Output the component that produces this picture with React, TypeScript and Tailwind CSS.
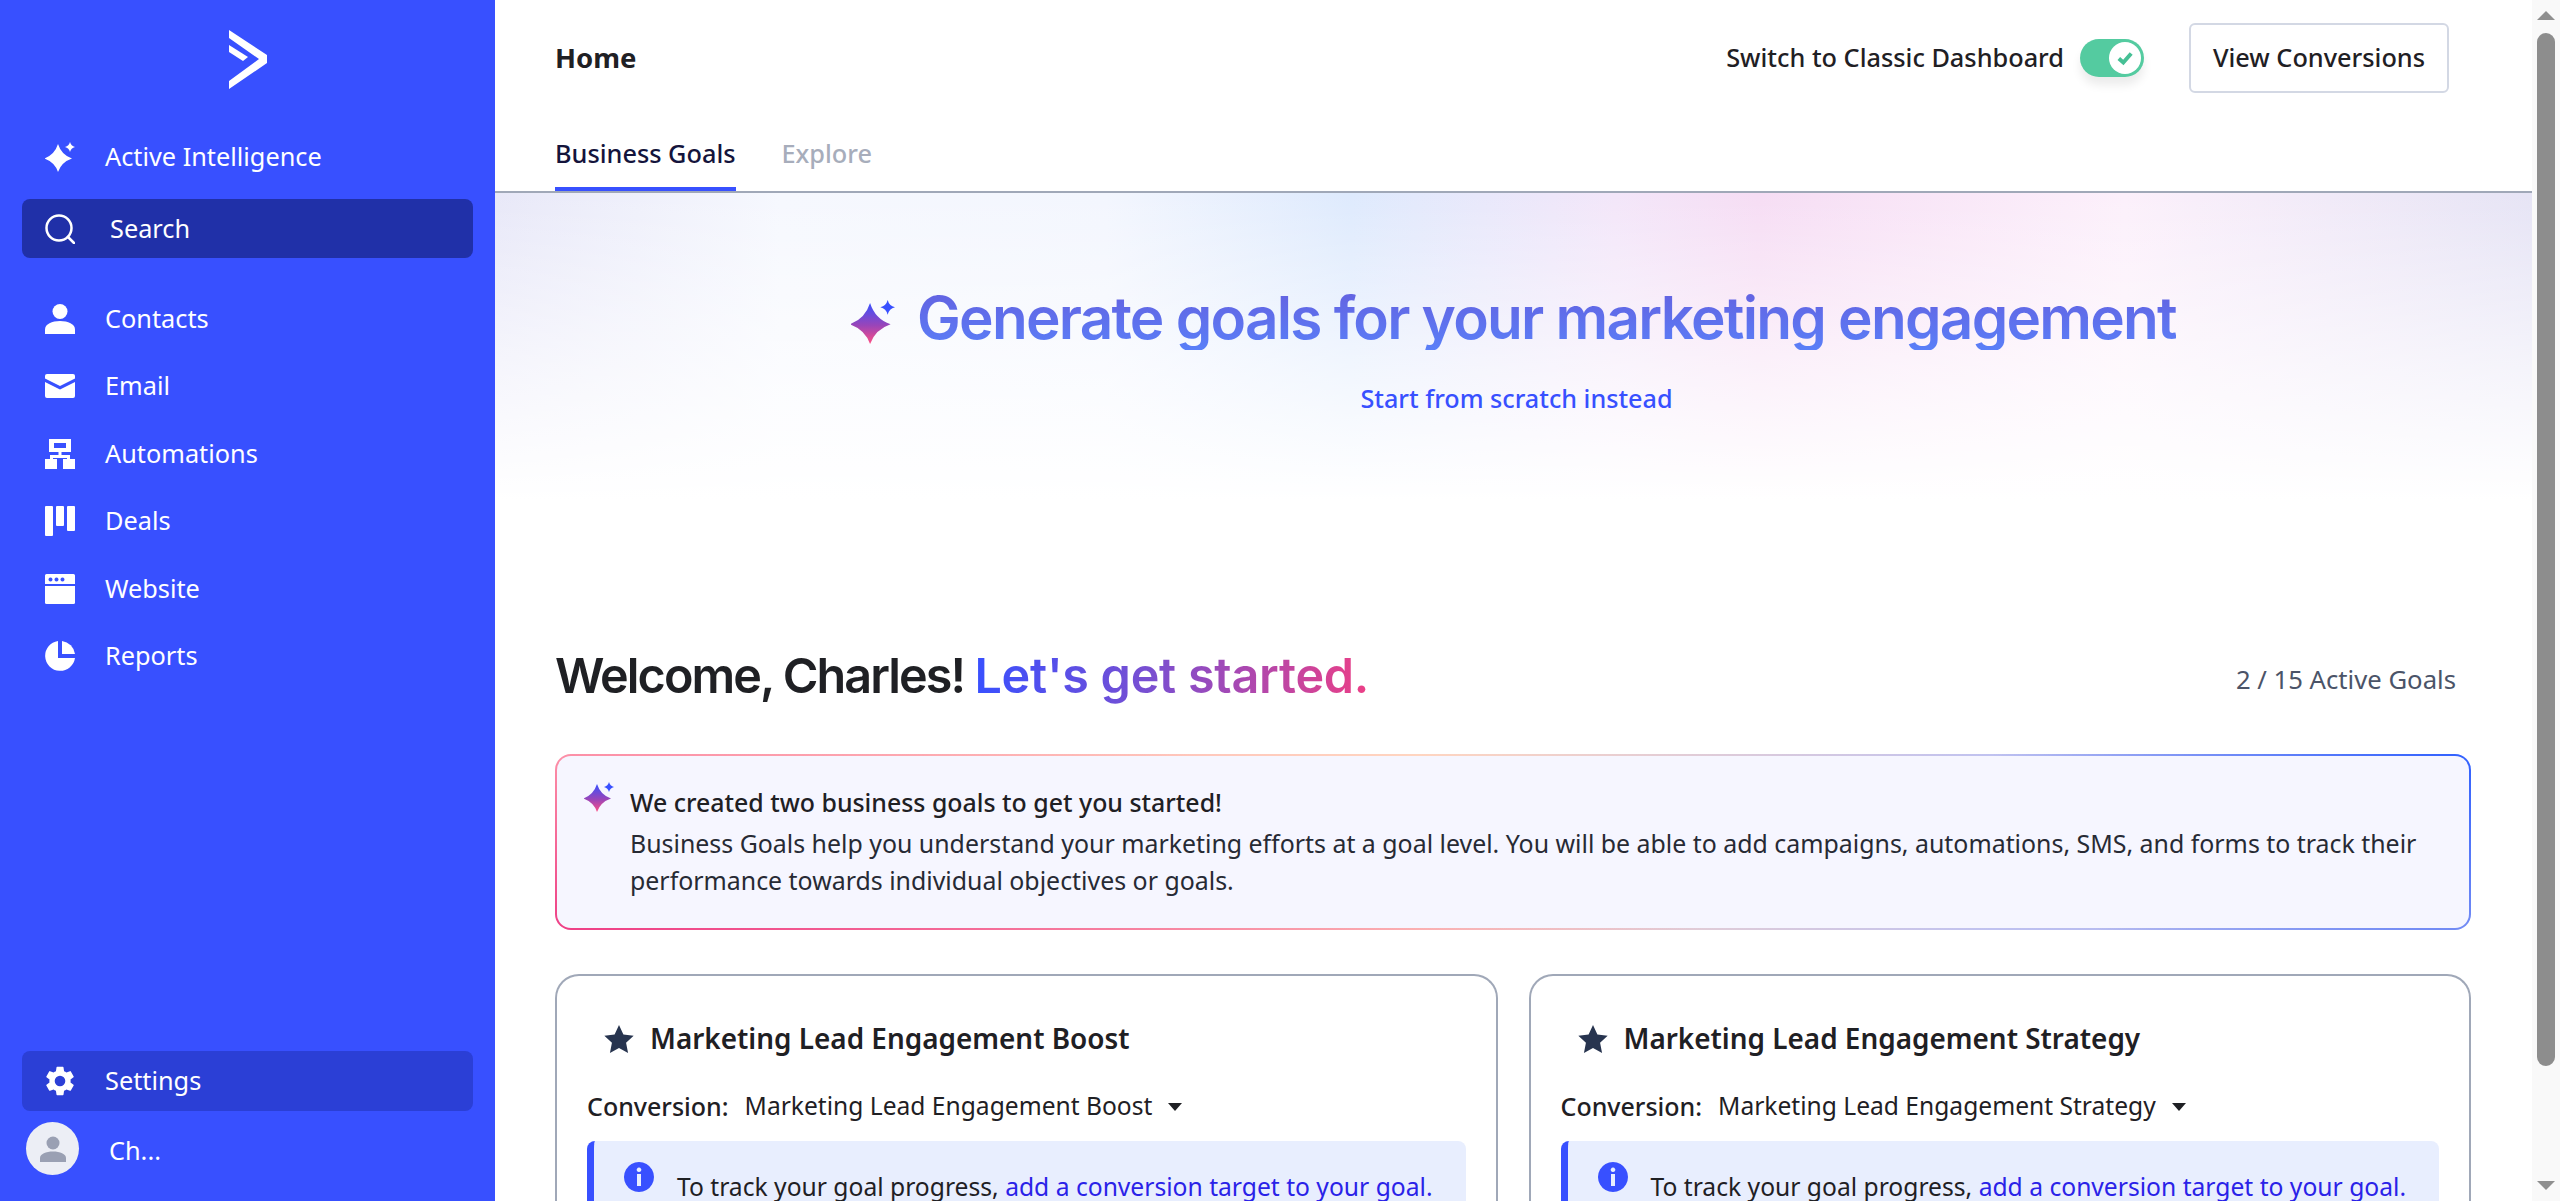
import React from "react";

const BODY = "font-['Noto_Sans','Liberation_Sans',sans-serif]";
const HEAD = "font-['Inter','Liberation_Sans',sans-serif]";

const Sparkle: React.FC<{ id: string; className?: string; gradient?: boolean }> = ({ id, className, gradient = true }) => {
    const fill = gradient ? `url(#${id})` : "currentColor";
    return (
        <svg viewBox="0 0 30 30" className={className}>
            {gradient && (
                <defs>
                    <linearGradient id={id} x1="0" y1="0" x2="0" y2="1">
                        <stop offset="0%" stopColor="#3850ff" />
                        <stop offset="55%" stopColor="#9a45b8" />
                        <stop offset="100%" stopColor="#ff4f84" />
                    </linearGradient>
                </defs>
            )}
            <path fill={fill} d="M13 2 Q16.500 13 27 16.500 Q16.500 20 13 30 Q9.500 20 -1 16.500 Q9.500 13 13 2 Z" />
            <path
                fill={gradient ? "#3850ff" : "currentColor"}
                d="M25 0 Q26 4 30 5 Q26 6 25 10 Q24 6 20 5 Q24 4 25 0 Z"
            />
        </svg>
    );
};

const PersonIcon = () => (
    <svg viewBox="0 0 30 30" className="w-[30px] h-[30px]" fill="currentColor">
        <circle cx="15" cy="7.500" r="7.500" />
        <path d="M0 25.500 C0 20 7 17 15 17 C23 17 30 20 30 25.500 L30 30 L0 30 Z" />
    </svg>
);

const MailIcon = () => (
    <svg viewBox="0 0 30 24" className="w-[30px] h-[24px]" fill="currentColor">
        <path d="M2 0 H28 A2 2 0 0 1 30 2 V4.500 L15 12 L0 4.500 V2 A2 2 0 0 1 2 0 Z" />
        <path d="M0 8 L15 15.500 L30 8 V22 A2 2 0 0 1 28 24 H2 A2 2 0 0 1 0 22 Z" />
    </svg>
);

const AutomationIcon = () => (
    <svg viewBox="0 0 30 30" className="w-[30px] h-[30px]" fill="currentColor">
        <path fillRule="evenodd" d="M4 0 H26 V13 H16.500 V16 H25 V20 H30 V30 H18 V20 H22 V19 H8 V20 H12 V30 H0 V20 H5 V16 H13.500 V13 H4 Z M9 4 V9 H21 V4 Z" />
    </svg>
);

const DealsIcon = () => (
    <svg viewBox="0 0 30 30" className="w-[30px] h-[30px]" fill="currentColor">
        <rect x="0" y="0" width="8" height="30" rx="1" />
        <rect x="11" y="0" width="8" height="20" rx="1" />
        <rect x="22" y="0" width="8" height="25" rx="1" />
    </svg>
);

const WebsiteIcon = () => (
    <svg viewBox="0 0 30 30" className="w-[30px] h-[30px]" fill="currentColor">
        <path fillRule="evenodd" d="M1.500 0 H28.500 A1.500 1.500 0 0 1 30 1.500 V10 H0 V1.500 A1.500 1.500 0 0 1 1.500 0 Z M5.500 3.500 A2 2 0 1 0 5.501 3.500 Z M11.500 3.500 A2 2 0 1 0 11.501 3.500 Z M17.500 3.500 A2 2 0 1 0 17.501 3.500 Z" />
        <path d="M0 12 H30 V28.500 A1.500 1.500 0 0 1 28.500 30 H1.500 A1.500 1.500 0 0 1 0 28.500 Z" />
    </svg>
);

const ReportsIcon = () => (
    <svg viewBox="0 0 30 30" className="w-[30px] h-[30px]" fill="currentColor">
        <path d="M13 0 V17 H30 A15 15 0 1 1 13 0 Z" />
        <path d="M17 0 A15 15 0 0 1 30 13 H17 Z" />
    </svg>
);

const GearIcon = () => (
    <svg viewBox="2.500 2 19 20" className="w-[28px] h-[30px] mx-[1px]" fill="currentColor">
        <path d="M19.140 12.940c.040-.300.060-.610.060-.940s-.020-.640-.070-.940l2.030-1.580a.49.490 0 0 0 .120-.610l-1.920-3.320a.49.490 0 0 0-.590-.220l-2.390.960a7 7 0 0 0-1.620-.940l-.360-2.540a.48.480 0 0 0-.480-.410h-3.840a.48.480 0 0 0-.470.410l-.360 2.540c-.590.240-1.130.570-1.620.940l-2.390-.960a.48.480 0 0 0-.590.220L2.740 8.870a.48.480 0 0 0 .120.610l2.030 1.580c-.050.300-.090.630-.090.940s.020.640.070.940l-2.030 1.580a.49.490 0 0 0-.120.610l1.920 3.320c.120.220.370.290.590.220l2.390-.960c.500.380 1.030.700 1.620.940l.360 2.540c.050.240.240.410.480.410h3.840c.240 0 .440-.170.470-.410l.360-2.540c.590-.240 1.130-.560 1.620-.940l2.390.960c.220.080.470 0 .590-.220l1.920-3.320a.48.480 0 0 0-.120-.610zM12 15.600a3.600 3.600 0 1 1 0-7.200 3.600 3.600 0 0 1 0 7.200z" />
    </svg>
);

const navItems: { label: string; icon: React.ReactNode }[] = [
    { label: "Contacts", icon: <PersonIcon /> },
    { label: "Email", icon: <MailIcon /> },
    { label: "Automations", icon: <AutomationIcon /> },
    { label: "Deals", icon: <DealsIcon /> },
    { label: "Website", icon: <WebsiteIcon /> },
    { label: "Reports", icon: <ReportsIcon /> },
];

const Sidebar = () => (
    <aside className="w-[495px] shrink-0 bg-[#3850ff] text-white flex flex-col pt-[30px] pb-[26px] text-[25.3px]">
        {/* Logo */}
        <div className="flex justify-center mb-[38px]">
            <svg viewBox="0 0 38 59" className="w-[38px] h-[59px]" fill="#fff">
                <path d="M0 0 L38 25 V33 L0 59 V51 L30 29 L0 8 Z" />
                <path d="M0 15 L19 27 L14 31 L0 22 Z" />
            </svg>
        </div>

        <div className="h-[60px] flex items-center pl-[45px] mb-[12px]">
            <Sparkle id="nav-spark" gradient={false} className="w-[30px] h-[30px]" />
            <span className="ml-[30px]">Active Intelligence</span>
        </div>

        <div className="h-[59px] mx-[22px] rounded-lg bg-[#2030a8] flex items-center pl-[23px] mb-[27px]">
            <svg viewBox="0 0 30 30" className="w-[30px] h-[30px]" fill="none" stroke="#fff" strokeWidth="2.500">
                <circle cx="14" cy="14" r="12.500" />
                <path d="M23 23 L29 29" strokeLinecap="round" />
            </svg>
            <span className="ml-[35px]">Search</span>
        </div>

        <nav className="flex flex-col">
            {navItems.map((item) => (
                <div key={item.label} className="h-[67.5px] flex items-center pl-[45px]">
                    <span className="w-[30px] flex justify-center">{item.icon}</span>
                    <span className="ml-[30px]">{item.label}</span>
                </div>
            ))}
        </nav>

        <div className="mt-auto">
            <div className="h-[60px] mx-[22px] rounded-lg bg-[#2b3fd6] flex items-center pl-[23px] mb-[11px]">
                <GearIcon />
                <span className="ml-[30px]">Settings</span>
            </div>
            <div className="flex items-center pl-[26px]">
                <div className="w-[53px] h-[53px] rounded-full bg-[#eceef5] flex items-center justify-center text-[#9aa0b3]">
                    <svg viewBox="0 0 26 26" className="w-[26px] h-[26px]" fill="currentColor">
                        <circle cx="13" cy="7" r="6.500" />
                        <path d="M0 26 V22 C0 18 6 15.500 13 15.500 C20 15.500 26 18 26 22 V26 Z" />
                    </svg>
                </div>
                <span className="ml-[30px] mt-[4px]">Ch...</span>
            </div>
        </div>
    </aside>
);

const Header = () => (
    <header className="h-[193px] shrink-0 border-b-2 border-[#a0a8b8] flex flex-col">
        <div className="flex items-center justify-between pl-[60px] pr-[83px] pt-[23px]">
            <h1 className="text-[27.500px] font-bold text-[#1f2024]">Home</h1>
            <div className="flex items-center">
                <span className="text-[25.300px] font-medium text-[#1f2024]">Switch to Classic Dashboard</span>
                <div className="relative w-[64px] h-[38px] rounded-full bg-[#54cba0] ml-[16px] shadow-[0_8px_10px_rgba(0,0,0,0.08)]">
                    <div className="absolute right-[3px] top-[3px] w-[32px] h-[32px] rounded-full bg-white flex items-center justify-center">
                        <svg viewBox="0 0 16 16" className="w-[18px] h-[18px]" fill="none" stroke="#46c095" strokeWidth="3.500">
                            <path d="M2.500 8.500 L6.500 12 L13.500 4" />
                        </svg>
                    </div>
                </div>
                <button className="w-[260px] h-[70px] ml-[45px] rounded-md border-2 border-[#d3d8e4] text-[25.300px] font-medium text-[#1f2024] bg-white">
                    View Conversions
                </button>
            </div>
        </div>
        <div className="flex pl-[60px] mt-auto gap-[46px] text-[25.300px] font-medium">
            <div className="h-[56px] border-b-4 border-[#3850ff] text-[#14143c]">Business Goals</div>
            <div className="text-[#a7adbb]">Explore</div>
        </div>
    </header>
);

const Hero = () => (
    <section className="h-[394px] shrink-0 flex flex-col items-center pt-[93px] bg-[linear-gradient(180deg,rgba(255,255,255,0)_0%,rgba(255,255,255,0.6)_45%,#fff_78%),linear-gradient(90deg,#e8e8f8_0%,#f6f8fe_14%,#f3f6fe_30%,#deeafd_42%,#f3e6f9_55%,#f6ddf4_62%,#fcf0fb_80%,#e6e4f5_100%)]">
        <div className="flex items-center">
            <Sparkle id="hero-spark" className="w-[44px] h-[46px] mr-[22px] mt-[8px]" />
            <h2 className={`${HEAD} text-[58.500px] leading-[64px] font-semibold tracking-[-0.03em] text-transparent bg-clip-text bg-[linear-gradient(180deg,#6460df,#5a7ff8)]`}>
                Generate goals for your marketing engagement
            </h2>
        </div>
        <a className="text-[25.200px] font-medium text-[#3850ff] mt-[30px] mr-[-6px]">Start from scratch instead</a>
    </section>
);

const GoalCard: React.FC<{ title: string }> = ({ title }) => (
    <div className="flex-1 min-w-0 rounded-[24px] border-2 border-[#a0a8b8] rounded-b-none border-b-0 h-[260px] pl-[30px] pr-[30px] overflow-hidden">
        <div className="flex items-center pl-[16px] pt-[42px]">
            <svg viewBox="0 0 24 24" className="w-[32px] h-[32px]" fill="#27344f">
                <path d="M12 1.500 L15.300 8.600 L23 9.500 L17.300 14.800 L18.800 22.500 L12 18.700 L5.200 22.500 L6.700 14.800 L1 9.500 L8.700 8.600 Z" />
            </svg>
            <h3 className="text-[27.900px] font-semibold text-[#1f2024] ml-[15px]">{title}</h3>
        </div>
        <div className="flex items-center text-[24.600px] mt-[28px] text-[#1f2024]">
            <span className="font-medium text-[25px]">Conversion:</span>
            <span className="ml-[16px]">{title}</span>
            <span className="ml-[16px] w-0 h-0 border-x-[7px] border-x-transparent border-t-[8px] border-t-[#1f2024]" />
        </div>
        <div className="flex items-start mt-[16px] h-[100px] rounded-lg bg-[#e8eefe] border-l-[7px] border-[#3850ff] pl-[30px] pt-[21px]">
            <svg viewBox="0 0 30 30" className="w-[30px] h-[30px] shrink-0" fill="#3850ff">
                <path fillRule="evenodd" d="M15 0 A15 15 0 1 1 14.999 0 Z M13 12 V24 H17 V12 Z M15 5.500 A2.300 2.300 0 1 0 15.001 5.500 Z" />
            </svg>
            <p className="ml-[23px] mt-[7px] text-[24.650px] text-[#1f2024] whitespace-nowrap">
                To track your goal progress, <a className="text-[#2a22e8]">add a conversion target to your goal.</a>
            </p>
        </div>
    </div>
);

const Scrollbar = () => (
    <div className="w-[28px] shrink-0 bg-[#f9f9f9] flex flex-col items-center">
        <span className="mt-[11px] w-0 h-0 border-x-[9px] border-x-transparent border-b-[9px] border-b-[#8f8f8f]" />
        <div className="mt-[13px] w-[18px] h-[1033px] rounded-full bg-[#8d8d8d]" />
        <span className="mt-auto mb-[11px] w-0 h-0 border-x-[9px] border-x-transparent border-t-[9px] border-t-[#8f8f8f]" />
    </div>
);

export default function App() {
    return (
        <div className={`${BODY} h-screen flex overflow-hidden bg-white`}>
            <Sidebar />
            <main className="flex-1 min-w-0 flex flex-col overflow-hidden">
                <Header />
                <Hero />
                <div className="pl-[60px] pr-[61px] pt-[57px]">
                    <div className="flex items-center justify-between">
                        <h2 className={`${HEAD} text-[48.500px] leading-[64px] font-semibold tracking-[-0.04em] text-[#1f2024]`}>
                            Welcome, Charles!{" "}
                            <span className="tracking-[-0.005em] text-transparent bg-clip-text bg-[linear-gradient(90deg,#3850ff_0%,#7a4fd0_45%,#ec3f86_100%)]">Let's get started.</span>
                        </h2>
                        <span className="text-[25.700px] text-[#4b5468] mr-[15px] mt-[8px]">2 / 15 Active Goals</span>
                    </div>
                    <div className="mt-[46px] rounded-2xl p-[2px] bg-[radial-gradient(ellipse_60%_120%_at_0%_100%,#ee3f86_0%,transparent_100%),radial-gradient(ellipse_25%_160%_at_100%_0%,#3060ff_0%,transparent_100%),linear-gradient(90deg,#ffa0ae_0%,#ffd5c0_45%,#c0c2f0_75%,#9aa5ee_100%)]">
                        <div className="h-[172px] rounded-[14px] bg-[#f6f6ff] flex items-start pl-[27px] pt-[25px]">
                            <Sparkle id="banner-spark" className="w-[30px] h-[32px] shrink-0" />
                            <div className="ml-[16px] text-[24.900px] leading-[37px] text-[#272a34] pr-[40px] pt-[3px]">
                                <p className="font-medium text-[#1f2024] mb-[4px]">We created two business goals to get you started!</p>
                                <p>
                                    Business Goals help you understand your marketing efforts at a goal level. You will be able to add campaigns, automations, SMS, and forms to track their performance towards individual objectives or goals.
                                </p>
                            </div>
                        </div>
                    </div>
                    <div className="flex gap-[31px] mt-[44px]">
                        <GoalCard title="Marketing Lead Engagement Boost" />
                        <GoalCard title="Marketing Lead Engagement Strategy" />
                    </div>
                </div>
            </main>
            <Scrollbar />
        </div>
    );
}
